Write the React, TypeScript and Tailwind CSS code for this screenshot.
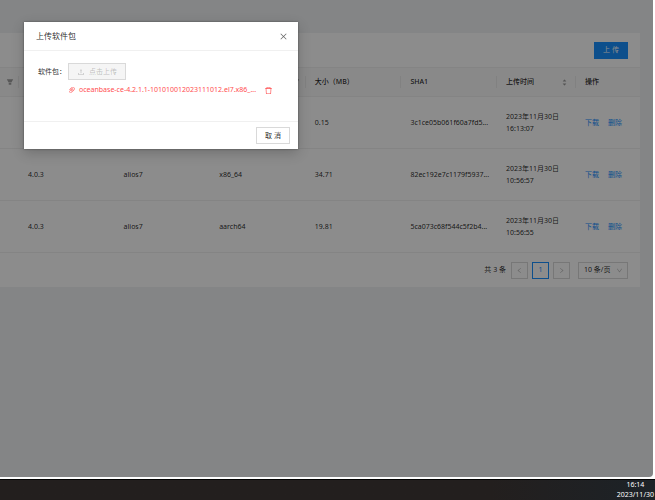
import { clsx } from 'clsx';
import {
  AiFillCaretDown,
  AiFillCaretUp,
  AiFillFilter,
  AiOutlineClose,
  AiOutlineDelete,
  AiOutlineDown,
  AiOutlineLeft,
  AiOutlinePaperClip,
  AiOutlineRight,
  AiOutlineUpload,
} from 'react-icons/ai';

interface PackageRow {
  version: string;
  system: string;
  arch: string;
  size: string;
  sha1: string;
  date: string;
  time: string;
}

const rows: PackageRow[] = [
  { version: '', system: '', arch: '', size: '0.15', sha1: '3c1ce05b061f60a7fd5...', date: '2023年11月30日', time: '16:13:07' },
  { version: '4.0.3', system: 'alios7', arch: 'x86_64', size: '34.71', sha1: '82ec192e7c1179f5937...', date: '2023年11月30日', time: '10:56:57' },
  { version: '4.0.3', system: 'alios7', arch: 'aarch64', size: '19.81', sha1: '5ca073c68f544c5f2b4...', date: '2023年11月30日', time: '10:56:55' },
];

const th = 'relative h-[29px] px-[9px] text-left font-medium whitespace-nowrap';
const td = 'h-[52px] px-[9px] whitespace-nowrap';

function Divider() {
  return <span className="absolute right-0 top-2 h-3 w-px bg-[#ececec]" />;
}

function PackageTable() {
  return (
    <table className="w-full table-fixed border-collapse">
      <colgroup>
        <col className="w-[19px]" />
        <col />
        <col />
        <col />
        <col />
        <col />
        <col className="w-[79px]" />
        <col className="w-[64px]" />
      </colgroup>
      <thead>
        <tr className="border-y border-[#f0f0f0] bg-[#fafafa]">
          <th className="relative h-[29px] pl-[6px]">
            <AiFillFilter className="size-2 text-[#a0a0a0]" />
            <Divider />
          </th>
          <th className={th}><Divider /></th>
          <th className={th}><Divider /></th>
          <th className="relative h-[29px] pr-[6px]">
            <AiFillFilter className="ml-auto size-2 text-[#a0a0a0]" />
            <Divider />
          </th>
          <th className={th}>大小（MB）<Divider /></th>
          <th className={th}>SHA1<Divider /></th>
          <th className={th}>
            <div className="flex items-center justify-between">
              上传时间
              <span className="flex flex-col text-[#999]">
                <AiFillCaretUp className="-mb-px size-[5px]" />
                <AiFillCaretDown className="size-[5px]" />
              </span>
            </div>
            <Divider />
          </th>
          <th className={th}>操作</th>
        </tr>
      </thead>
      <tbody>
        {rows.map((row) => (
          <tr key={row.time} className="border-b border-[#f0f0f0]">
            <td className={td} />
            <td className={td}>{row.version}</td>
            <td className={td}>{row.system}</td>
            <td className={td}>{row.arch}</td>
            <td className={td}>{row.size}</td>
            <td className={td}>{row.sha1}</td>
            <td className={td}>
              {row.date}
              <br />
              {row.time}
            </td>
            <td className={td}>
              <div className="flex gap-[9px] text-[#1890ff]">
                <a href="#download">下载</a>
                <a href="#delete">删除</a>
              </div>
            </td>
          </tr>
        ))}
      </tbody>
    </table>
  );
}

function Pagination() {
  const box = 'flex size-[17px] items-center justify-center border';
  return (
    <div className="flex h-[34px] items-center justify-end gap-1 pr-3">
      <span className="mr-px">共 3 条</span>
      <button className={clsx(box, 'border-[#d9d9d9] text-black/30')} aria-label="上一页" disabled>
        <AiOutlineLeft className="size-[7px]" />
      </button>
      <button className={clsx(box, 'border-[#1890ff] text-[#1890ff]')}>1</button>
      <button className={clsx(box, 'border-[#d9d9d9] text-black/30')} aria-label="下一页" disabled>
        <AiOutlineRight className="size-[7px]" />
      </button>
      <div className="relative ml-1">
        <select aria-label="每页条数" className="block h-[17px] w-[50px] appearance-none border border-[#d9d9d9] pl-[5px]">
          <option>10 条/页</option>
        </select>
        <AiOutlineDown className="pointer-events-none absolute top-[5px] right-[5px] size-[7px] text-black/30" />
      </div>
    </div>
  );
}

function UploadDialog() {
  return (
    <div
      role="dialog"
      aria-label="上传软件包"
      className="relative mt-[22px] ml-6 w-[274px] self-start bg-white shadow-[0_0_2px_rgba(0,0,0,0.4),0_4px_12px_rgba(0,0,0,0.2)]"
    >
      <header className="flex h-[29px] items-center justify-between border-b border-[#f0f0f0] pr-[10px] pl-3">
        <h2 className="text-[8px] font-normal">上传软件包</h2>
        <button aria-label="关闭" className="text-black/60">
          <AiOutlineClose className="size-[9px]" />
        </button>
      </header>
      <div className="flex h-[70px] gap-1 pt-3 pl-[14px]">
        <label htmlFor="upload" className="h-[17px] leading-[17px]">软件包：</label>
        <div className="-ml-[2px]">
          <button
            id="upload"
            disabled
            className="flex h-[17px] w-[58px] items-center justify-center gap-1 border border-[#d9d9d9] bg-[#f5f5f5] text-black/25"
          >
            <AiOutlineUpload className="size-2" />
            点击上传
          </button>
          <div className="mt-1 flex items-center text-[#ff4d4f]">
            <AiOutlinePaperClip className="mr-[3px] size-2" />
            <span className="whitespace-nowrap">oceanbase-ce-4.2.1.1-101010012023111012.el7.x86_...</span>
            <button aria-label="删除文件" className="ml-2">
              <AiOutlineDelete className="size-[9px]" />
            </button>
          </div>
        </div>
      </div>
      <footer className="flex h-[28px] items-center justify-end border-t border-[#f0f0f0] pr-2">
        <button className="h-[17px] w-[34px] border border-[#d9d9d9]">取 消</button>
      </footer>
    </div>
  );
}

export default function App() {
  return (
    <div className="flex h-screen flex-col bg-white font-['Noto_Sans','Noto_Sans_CJK_SC',sans-serif] text-[7px] leading-[12px] text-black/85">
      <div className="relative mr-[2px] mb-[2px] flex-1 overflow-hidden rounded-br bg-[#f0f2f5]">
        <main className="mt-[33px] mr-[13px] bg-white">
          <div className="flex h-[34px] items-center justify-end pr-3">
            <button className="h-[17px] w-[34px] bg-[#1890ff] text-white">上 传</button>
          </div>
          <PackageTable />
          <Pagination />
        </main>
        <div className="absolute inset-0 flex bg-black/45">
          <UploadDialog />
        </div>
      </div>
      <footer className="flex h-[21px] flex-col items-end border-t border-black bg-linear-to-r from-[#231f1e] from-75% to-[#1c2227] pr-px text-white">
        <div className="text-center leading-[10px]">
          16:14
          <br />
          2023/11/30
        </div>
      </footer>
    </div>
  );
}
